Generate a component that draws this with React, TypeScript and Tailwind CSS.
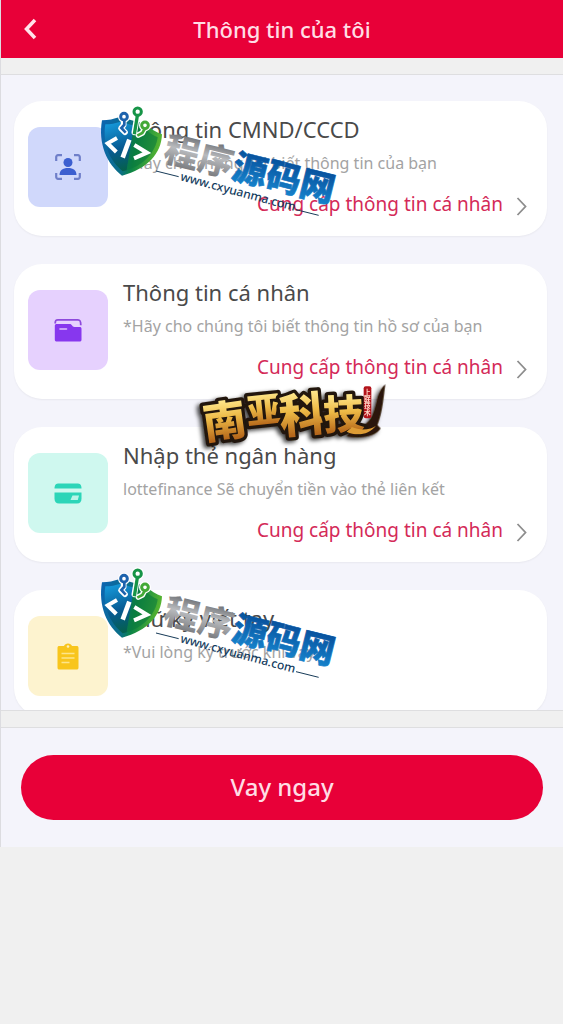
import type { ReactNode } from "react";

function IdIcon() {
  return (
    <svg viewBox="0 0 26 26" className="size-[26px]" fill="none">
      <path
        d="M1.2 7V3a1.8 1.8 0 0 1 1.8-1.8h4M19 1.2h4A1.8 1.8 0 0 1 24.8 3v4M24.8 19v4a1.8 1.8 0 0 1-1.8 1.8h-4M7 24.8H3A1.8 1.8 0 0 1 1.2 23v-4"
        stroke="#6f7fc9"
        strokeWidth="2.2"
      />
      <circle cx="13" cy="8.5" r="4.5" fill="#3c5fd0" />
      <path d="M4.500 21c0-4.600 3.200-7 8.500-7s8.500 2.400 8.500 7z" fill="#3c5fd0" />
    </svg>
  );
}

function FolderIcon() {
  return (
    <svg viewBox="0 0 28 24" className="w-7 h-6" fill="none">
      <path
        d="M1.200 5.500C1.200 2.500 2 1.800 4 1.800h20c2 0 2.800 1 2.800 5.500"
        stroke="#8e49dc"
        strokeWidth="1.800"
      />
      <path
        d="M3 6h12.500c1.500 0 2 .6 2.600 1.600.5.900 1 1.400 2.400 1.400H25.500c1.400 0 2 .6 2 2v10.500c0 1.400-.6 2-2 2H3c-1.500 0-2.200-.6-2.200-2V8c0-1.400.7-2 2.200-2z"
        fill="#8737ee"
      />
      <path d="M6 11h6.500" stroke="#dfc4fb" strokeWidth="1.600" strokeLinecap="round" />
    </svg>
  );
}

function CardIcon() {
  return (
    <svg viewBox="0 0 28 21" className="w-7 h-[21px]" fill="none">
      <path d="M0.500 5.500C.5 1.800 2 .5 5 .5h18c3 0 4.500 1.300 4.500 5z" fill="#2cd5b8" />
      <path d="M.5 9.500h27v6.300c0 3.200-1.500 4.700-4.500 4.700H5c-3 0-4.500-1.500-4.500-4.700z" fill="#2cd5b8" />
      <path d="M16.500 17l2-4.500h6.500l-1.200 4.500z" fill="#b9f4e8" />
    </svg>
  );
}

function ClipboardIcon() {
  return (
    <svg viewBox="0 0 22 27" className="w-[22px] h-[27px]" fill="none">
      <path
        d="M2.500 3H7c.6-1.600 2-2.600 4-2.600S14.400 1.400 15 3h4.500c1.400 0 2 .6 2 2v19.500c0 1.400-.6 2-2 2h-17c-1.400 0-2-.6-2-2V5c0-1.400.6-2 2-2z"
        fill="#f8c51c"
      />
      <circle cx="11" cy="3.500" r="1.300" fill="#fdf0bd" />
      <path d="M4.500 10.500h13M4.500 15h13M4.500 19.500h8" stroke="#fde58a" strokeWidth="1.500" />
    </svg>
  );
}

function SourceCodeLogo({ id }: { id: string }) {
  return (
    <svg viewBox="0 0 780 390" className="w-[260px] h-[130px]" fill="none" aria-hidden="true">
      <defs>
        <linearGradient id={`${id}-shield`} x1="35" y1="110" x2="215" y2="150" gradientUnits="userSpaceOnUse">
          <stop offset="0" stopColor="#0c66ae" />
          <stop offset="0.45" stopColor="#0b6f86" />
          <stop offset="0.6" stopColor="#0c8446" />
          <stop offset="1" stopColor="#5cb82f" />
        </linearGradient>
        <linearGradient id={`${id}-inner`} x1="80" y1="80" x2="130" y2="230" gradientUnits="userSpaceOnUse">
          <stop offset="0" stopColor="#1597d8" />
          <stop offset="0.5" stopColor="#075a92" />
          <stop offset="1" stopColor="#04613f" />
        </linearGradient>
        <linearGradient id={`${id}-grey`} x1="0" y1="0" x2="0" y2="1">
          <stop offset="0.2" stopColor="#6f7175" />
          <stop offset="0.5" stopColor="#b9bbbe" />
          <stop offset="0.85" stopColor="#7d7f83" />
        </linearGradient>
        <linearGradient id={`${id}-blue`} x1="0" y1="0" x2="0" y2="1">
          <stop offset="0.2" stopColor="#07509c" />
          <stop offset="0.9" stopColor="#1684cd" />
        </linearGradient>
      </defs>

      <path
        d="M36 76C56 76 70 72 90 66L168 88C182 102 198 112 216 118C214 176 172 222 96 242C50 206 24 146 36 76z"
        fill={`url(#${id}-shield)`}
      />
      <path d="M46 88C62 88 76 85 92 80L132 92L110 226L98 229C58 196 37 146 46 88z" fill={`url(#${id}-inner)`} />
      <path d="M132 92L164 101C176 112 190 121 203 127C197 172 160 212 110 226z" fill="#0a7a3c" opacity="0.6" />

      <g stroke="#fff" strokeWidth="17" strokeLinecap="round" strokeLinejoin="round">
        <path d="M101 76v14l-8 10 12 12M142 60l-9 52M163 102l-6 12-12 6" />
      </g>
      <circle cx="102" cy="65" r="18" fill="#fff" />
      <circle cx="143" cy="50" r="19" fill="#fff" />
      <circle cx="165" cy="91" r="18" fill="#fff" />
      <path d="M103 77v12l-9 10 13 14" stroke="#1d62ad" strokeWidth="8" />
      <path d="M142 62l-9 56" stroke="#169447" strokeWidth="10" />
      <path d="M164 102l-7 12-15 8" stroke="#43a936" strokeWidth="8" />
      <circle cx="102" cy="65" r="10" stroke="#1d62ad" strokeWidth="9" />
      <circle cx="143" cy="50" r="11" stroke="#169447" strokeWidth="9" />
      <circle cx="165" cy="91" r="10" stroke="#43a936" strokeWidth="9" />

      <path d="M81 129L53 145L79 171M133 150L171 173L132 190" stroke="#fff" strokeWidth="12" />
      <path d="M118 134L98 188" stroke="#fff" strokeWidth="14" />

      <g fontFamily="'Noto Sans CJK SC', sans-serif" fontWeight="900">
        <text transform="translate(216 196) rotate(14)" fontSize="105" fill={`url(#${id}-grey)`}>
          程序
        </text>
        <text
          transform="translate(421 248) rotate(14)"
          fontSize="104"
          fill={`url(#${id}-blue)`}
          stroke={`url(#${id}-blue)`}
          strokeWidth="2"
        >
          源码网
        </text>
      </g>
      <path d="M198 228L266 245M618 344L686 361" stroke="#173b58" strokeWidth="3" />
      <text
        transform="translate(269 256) rotate(15)"
        fontFamily="'Noto Sans', sans-serif"
        fontSize="36"
        fontWeight="500"
        fill="#153d60"
      >
        www.cxyuanma.com
      </text>
    </svg>
  );
}

function GoldLogo() {
  return (
    <svg viewBox="0 0 690 255" className="w-[230px] h-[85px] overflow-visible" fill="none" aria-hidden="true">
      <defs>
        <linearGradient id="gold" x1="0" y1="0" x2="0" y2="1">
          <stop offset="0.2" stopColor="#ffe98f" />
          <stop offset="0.5" stopColor="#edb945" />
          <stop offset="0.85" stopColor="#b5661a" />
        </linearGradient>
        <filter id="gold-shadow" x="-10%" y="-20%" width="120%" height="140%">
          <feDropShadow dx="-8" dy="6" stdDeviation="6" floodColor="#000" floodOpacity="0.75" />
        </filter>
      </defs>
      <g filter="url(#gold-shadow)">
        <path
          d="M586 28C580 66 578 112 562 150L572 160C558 182 522 192 470 184L496 152C540 158 550 120 560 80C564 58 572 40 586 28z"
          fill="#2b1607"
        />
        <g
          fontFamily="'Noto Sans CJK SC', sans-serif"
          fontWeight="900"
          fill="url(#gold)"
          stroke="#20150c"
          strokeWidth="20"
          strokeLinejoin="round"
          paintOrder="stroke"
        >
          <text transform="translate(46 194) rotate(-8)" fontSize="130">南</text>
          <text transform="translate(174 148) rotate(-6)" fontSize="104">亚</text>
          <text transform="translate(272 176) rotate(-5)" fontSize="140">科</text>
          <text transform="translate(402 166) rotate(-3)" fontSize="122">技</text>
        </g>
      </g>
      <path d="M470 170C500 184 536 180 558 152C544 164 510 168 486 156z" fill="#dd9c35" />
      <rect x="521" y="34" width="23" height="96" rx="6" fill="#b3141b" />
      <text
        x="532"
        y="42"
        fontFamily="'Noto Sans CJK SC', sans-serif"
        fontSize="20"
        fontWeight="700"
        fill="#ffd9c9"
        className="[writing-mode:vertical-rl]"
      >
        上联技术
      </text>
    </svg>
  );
}

interface InfoItem {
  title: string;
  description: string;
  action?: string;
  tile: string;
  icon: ReactNode;
}

const items: InfoItem[] = [
  {
    title: "Thông tin CMND/CCCD",
    description: "*Hãy cho chúng tôi biết thông tin của bạn",
    action: "Cung cấp thông tin cá nhân",
    tile: "bg-[#d0d8fb]",
    icon: <IdIcon />,
  },
  {
    title: "Thông tin cá nhân",
    description: "*Hãy cho chúng tôi biết thông tin hồ sơ của bạn",
    action: "Cung cấp thông tin cá nhân",
    tile: "bg-[#e6d1fe]",
    icon: <FolderIcon />,
  },
  {
    title: "Nhập thẻ ngân hàng",
    description: "lottefinance Sẽ chuyển tiền vào thẻ liên kết",
    action: "Cung cấp thông tin cá nhân",
    tile: "bg-[#cff8ef]",
    icon: <CardIcon />,
  },
  {
    title: "Chữ ký viết tay",
    description: "*Vui lòng ký trước khi vay",
    tile: "bg-[#fdf3cf]",
    icon: <ClipboardIcon />,
  },
];

export default function App() {
  return (
    <div className="relative min-h-screen bg-[#f0f0f0] font-['Noto_Sans',sans-serif]">
      <div className="border-l border-[#dcdce0] bg-[#f4f4fb]">
        <header className="grid grid-cols-[60px_1fr_60px] items-center h-[58px] bg-[#e80038] text-white">
          <button type="button" aria-label="Quay lại" className="flex pl-[21px] py-3">
            <svg viewBox="0 0 16 22" className="w-4 h-[22px]" fill="none">
              <path d="M13 2L4.500 11l8.500 9" stroke="#ffe3ea" strokeWidth="3.500" />
            </svg>
          </button>
          <h1 className="text-center text-[22px] leading-8 font-medium text-[#ffdde5]">
            Thông tin của tôi
          </h1>
        </header>

        <div className="h-[17px] border-b border-[#dedee0] bg-[#f0f0f0]" />

        {/* Scrollable list of steps */}
        <main className="flex flex-col gap-7 h-[62vh] overflow-y-auto [scrollbar-width:none] pt-[26px] pl-[13px] pr-4">
          {items.map(({ title, description, action, tile, icon }) => (
            <section
              key={title}
              className="flex shrink-0 gap-4 rounded-[28px] bg-white pl-3.5 pr-[18px] pt-3 pb-5 shadow-[0_1px_2px_rgba(0,0,0,0.05)]"
            >
              <div className={`flex items-center justify-center shrink-0 size-20 mt-3.5 -mr-px rounded-xl ${tile}`}>
                {icon}
              </div>
              <div className="flex flex-col flex-1 min-w-0">
                <h2 className="text-[22px] leading-8 text-[#4a4a4a]">{title}</h2>
                <p className="mt-1.5 text-base leading-6 text-[#a3a3a3]">{description}</p>
                {action && (
                  <a
                    href="#"
                    className="flex items-center justify-end gap-3 mt-[17px] text-[19px] leading-6 text-[#d42a58]"
                  >
                    {action}
                    <svg viewBox="0 0 14 20" className="w-3.5 h-5 mt-1" fill="none">
                      <path d="M2.500 2l8 8.500-8 8.500" stroke="#8d8d8d" strokeWidth="1.800" />
                    </svg>
                  </a>
                )}
              </div>
            </section>
          ))}
        </main>

        <div className="h-[18px] border-y border-[#dedee0] bg-[#f0f0f0]" />

        <footer className="py-[27px] px-5">
          <button
            type="button"
            className="w-full h-[65px] rounded-full bg-[#e80038] text-2xl font-medium text-[#ffdde5]"
          >
            Vay ngay
          </button>
        </footer>
      </div>

      {/* Watermarks */}
      <div className="absolute left-[90px] top-[95px] pointer-events-none">
        <SourceCodeLogo id="mark-a" />
      </div>
      <div className="absolute left-[190px] top-[375px] pointer-events-none">
        <GoldLogo />
      </div>
      <div className="absolute left-[90px] top-[557px] pointer-events-none">
        <SourceCodeLogo id="mark-b" />
      </div>
    </div>
  );
}
